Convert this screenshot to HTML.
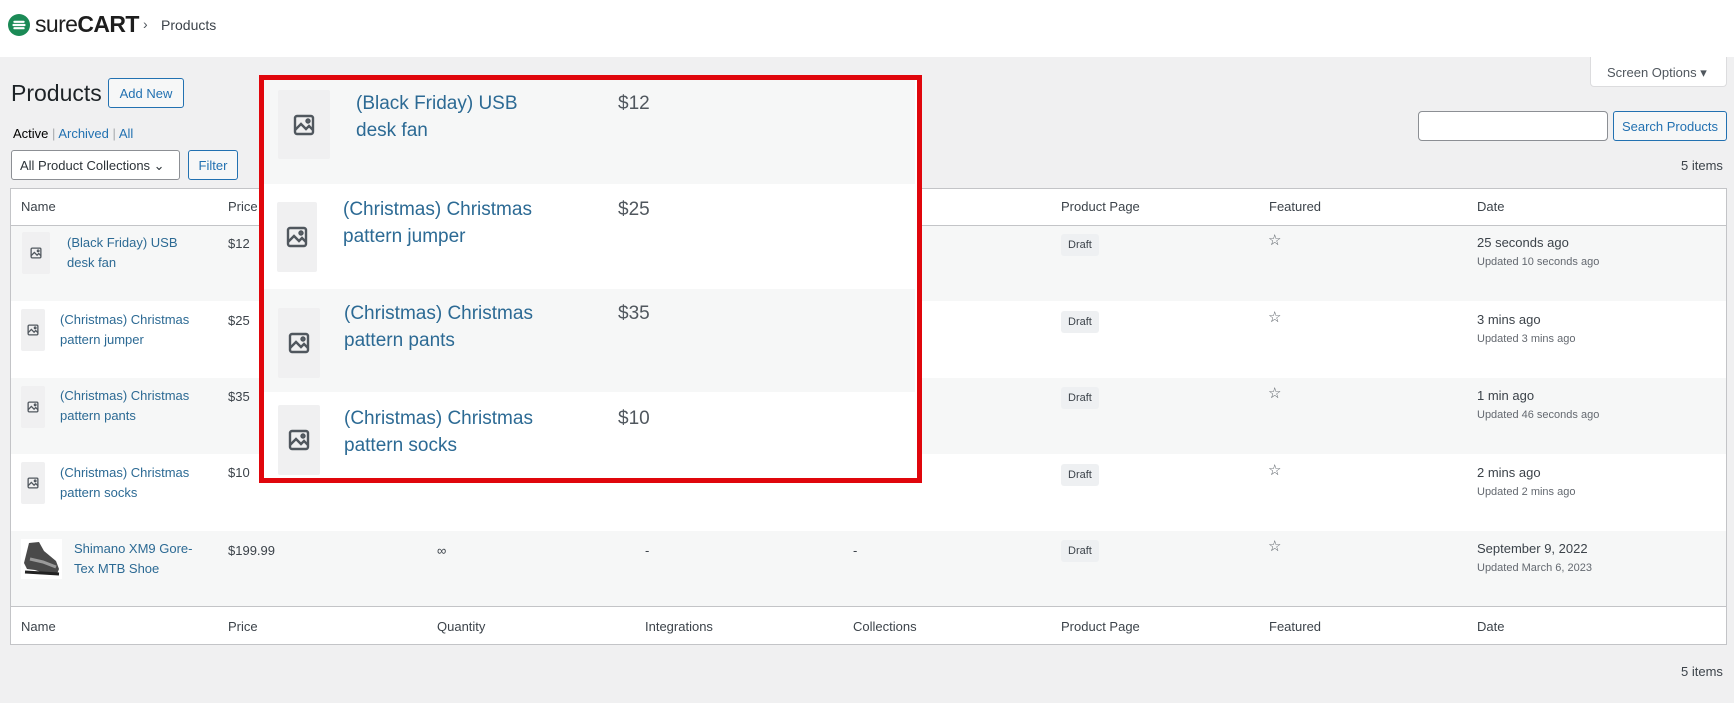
<!DOCTYPE html>
<html><head><meta charset="utf-8">
<style>
*{margin:0;padding:0;box-sizing:border-box}
body{width:1734px;height:703px;background:#f0f0f1;font-family:"Liberation Sans",sans-serif;color:#3c434a;position:relative;overflow:hidden;font-size:13px}
.a{position:absolute;white-space:nowrap}
.lnk{color:#2271b1}
.nm{color:#2c6a94;font-size:13px;line-height:20px}
.ic{position:absolute;background:#f0f0f1;border-radius:2px}
.ic svg{position:absolute;left:50%;top:50%;transform:translate(-50%,-50%)}
.draft{position:absolute;background:#eef0f2;color:#3c434a;font-size:11px;padding:5px 7px;border-radius:3px}
.star{position:absolute;font-size:15px;color:#50575e}
.row{position:absolute;left:11px;width:1715px;height:76px}
.g{background:#f6f7f7}.w{background:#fff}
.dt{position:absolute;font-size:13px;color:#3c434a}
.dt small{display:block;font-size:11px;color:#646970;margin-top:6px}
.big{color:#2c6a94;font-size:19px;line-height:27px}
</style></head><body>
<div class="a" style="left:0;top:0;width:1734px;height:57px;background:#fff"></div>
<svg class="a" style="left:8px;top:14px" width="22" height="22" viewBox="0 0 24 24"><circle cx="12" cy="12" r="12" fill="#1b8a56"/><path d="M7 8.5h10M6 12h12M7 15.5h10" stroke="#fff" stroke-width="2.4" stroke-linecap="round"/></svg>
<div class="a" style="left:35px;top:11px;font-size:23px;color:#1e1e1e;letter-spacing:-0.6px">sure<b>CART</b></div>
<div class="a" style="left:143px;top:16px;font-size:14px;color:#50575e">›</div>
<div class="a" style="left:161px;top:17px;font-size:14px;color:#3c434a">Products</div>

<div class="a" style="left:1590px;top:57px;width:137px;height:30px;background:#fff;border:1px solid #dcdcde;border-top:0;border-radius:0 0 4px 4px;font-size:13px;color:#50575e;padding:8px 0 0 16px">Screen Options ▾</div>

<div class="a" style="left:11px;top:80px;font-size:23px;color:#1d2327">Products</div>
<div class="a" style="left:108px;top:78px;width:76px;height:30px;border:1px solid #2271b1;border-radius:3px;background:#f6f7f7;color:#2271b1;font-size:13px;padding-top:7px;text-align:center">Add New</div>
<div class="a" style="left:13px;top:126px;font-size:13px;color:#000">Active <span style="color:#a7aaad">|</span> <span class="lnk">Archived</span> <span style="color:#a7aaad">|</span> <span class="lnk">All</span></div>
<div class="a" style="left:11px;top:150px;width:169px;height:30px;border:1px solid #8c8f94;border-radius:3px;background:#fff;font-size:13px;color:#2c3338;padding:7px 0 0 8px">All Product Collections ⌄</div>
<div class="a" style="left:188px;top:150px;width:50px;height:30px;border:1px solid #2271b1;border-radius:3px;background:#f6f7f7;color:#2271b1;font-size:13px;padding-top:7px;text-align:center">Filter</div>
<div class="a" style="left:1418px;top:111px;width:190px;height:30px;border:1px solid #8c8f94;border-radius:4px;background:#fff"></div>
<div class="a" style="left:1613px;top:111px;width:114px;height:30px;border:1px solid #2271b1;border-radius:3px;background:#f6f7f7;color:#2271b1;font-size:13px;padding-top:7px;text-align:center">Search Products</div>
<div class="a" style="left:1681px;top:158px;font-size:13px">5 items</div>

<div class="a" style="left:10px;top:188px;width:1717px;height:457px;background:#fff;border:1px solid #c3c4c7"></div>
<div class="a" style="left:11px;top:225px;width:1715px;height:1px;background:#c3c4c7"></div>
<div class="a" style="left:11px;top:606px;width:1715px;height:1px;background:#c3c4c7"></div>
<div class="row g" style="top:226px;height:75px"></div>
<div class="row w" style="top:301px"></div>
<div class="row g" style="top:378px"></div>
<div class="row w" style="top:454px"></div>
<div class="row g" style="top:531px;height:75px"></div>

<div class="a" style="top:199px;left:21px">Name</div>
<div class="a" style="top:199px;left:228px">Price</div>
<div class="a" style="top:199px;left:437px">Quantity</div>
<div class="a" style="top:199px;left:645px">Integrations</div>
<div class="a" style="top:199px;left:853px">Collections</div>
<div class="a" style="top:199px;left:1061px">Product Page</div>
<div class="a" style="top:199px;left:1269px">Featured</div>
<div class="a" style="top:199px;left:1477px">Date</div>
<div class="a" style="top:619px;left:21px">Name</div>
<div class="a" style="top:619px;left:228px">Price</div>
<div class="a" style="top:619px;left:437px">Quantity</div>
<div class="a" style="top:619px;left:645px">Integrations</div>
<div class="a" style="top:619px;left:853px">Collections</div>
<div class="a" style="top:619px;left:1061px">Product Page</div>
<div class="a" style="top:619px;left:1269px">Featured</div>
<div class="a" style="top:619px;left:1477px">Date</div>

<div class="ic" style="left:22px;top:232px;width:28px;height:42px"><svg width="13" height="13" viewBox="0 0 24 24" fill="none" stroke="#50575e" stroke-width="2.4"><rect x="3" y="3" width="18" height="18" rx="2"/><path d="M3 17l6-6 5 5 3-3 4 4"/><circle cx="16" cy="8" r="1.5"/></svg></div>
<div class="a nm" style="left:67px;top:233px">(Black Friday) USB<br>desk fan</div>
<div class="a" style="left:228px;top:236px">$12</div>

<div class="ic" style="left:21px;top:309px;width:24px;height:42px"><svg width="13" height="13" viewBox="0 0 24 24" fill="none" stroke="#50575e" stroke-width="2.4"><rect x="3" y="3" width="18" height="18" rx="2"/><path d="M3 17l6-6 5 5 3-3 4 4"/><circle cx="16" cy="8" r="1.5"/></svg></div>
<div class="a nm" style="left:60px;top:310px">(Christmas) Christmas<br>pattern jumper</div>
<div class="a" style="left:228px;top:313px">$25</div>

<div class="ic" style="left:21px;top:386px;width:24px;height:42px"><svg width="13" height="13" viewBox="0 0 24 24" fill="none" stroke="#50575e" stroke-width="2.4"><rect x="3" y="3" width="18" height="18" rx="2"/><path d="M3 17l6-6 5 5 3-3 4 4"/><circle cx="16" cy="8" r="1.5"/></svg></div>
<div class="a nm" style="left:60px;top:386px">(Christmas) Christmas<br>pattern pants</div>
<div class="a" style="left:228px;top:389px">$35</div>

<div class="ic" style="left:21px;top:462px;width:24px;height:42px"><svg width="13" height="13" viewBox="0 0 24 24" fill="none" stroke="#50575e" stroke-width="2.4"><rect x="3" y="3" width="18" height="18" rx="2"/><path d="M3 17l6-6 5 5 3-3 4 4"/><circle cx="16" cy="8" r="1.5"/></svg></div>
<div class="a nm" style="left:60px;top:463px">(Christmas) Christmas<br>pattern socks</div>
<div class="a" style="left:228px;top:465px">$10</div>

<svg class="a" style="left:21px;top:539px" width="41" height="40" viewBox="0 0 41 40"><rect width="41" height="40" fill="#fff"/><path d="M8 4l10-1 5 9 12 10 3 8-2 5-10 0-12-4-8-1-3-6z" fill="#4a4a4a"/><path d="M9 20l13 3 13 5" stroke="#9a9a9a" stroke-width="3" fill="none"/><path d="M4 33l34 2" stroke="#222" stroke-width="3"/></svg>
<div class="a nm" style="left:74px;top:539px">Shimano XM9 Gore-<br>Tex MTB Shoe</div>
<div class="a" style="left:228px;top:543px">$199.99</div>
<div class="a" style="left:437px;top:543px">∞</div>
<div class="a" style="left:645px;top:543px">-</div>
<div class="a" style="left:853px;top:543px">-</div>

<div class="draft" style="left:1061px;top:234px">Draft</div>
<div class="draft" style="left:1061px;top:311px">Draft</div>
<div class="draft" style="left:1061px;top:387px">Draft</div>
<div class="draft" style="left:1061px;top:464px">Draft</div>
<div class="draft" style="left:1061px;top:540px">Draft</div>
<div class="star" style="left:1268px;top:231px">☆</div>
<div class="star" style="left:1268px;top:308px">☆</div>
<div class="star" style="left:1268px;top:384px">☆</div>
<div class="star" style="left:1268px;top:461px">☆</div>
<div class="star" style="left:1268px;top:537px">☆</div>
<div class="dt" style="left:1477px;top:235px">25 seconds ago<small>Updated 10 seconds ago</small></div>
<div class="dt" style="left:1477px;top:312px">3 mins ago<small>Updated 3 mins ago</small></div>
<div class="dt" style="left:1477px;top:388px">1 min ago<small>Updated 46 seconds ago</small></div>
<div class="dt" style="left:1477px;top:465px">2 mins ago<small>Updated 2 mins ago</small></div>
<div class="dt" style="left:1477px;top:541px">September 9, 2022<small>Updated March 6, 2023</small></div>

<div class="a" style="left:1681px;top:664px;font-size:13px">5 items</div>

<div class="a" style="left:259px;top:75px;width:663px;height:408px;border:5px solid #e0060c;background:#fff;overflow:hidden">
  <div class="a" style="left:0;top:0;width:651px;height:104px;background:#f6f7f7"></div>
  <div class="a" style="left:0;top:104px;width:651px;height:105px;background:#fff"></div>
  <div class="a" style="left:0;top:209px;width:651px;height:103px;background:#f6f7f7"></div>
  <div class="a" style="left:0;top:312px;width:651px;height:89px;background:#fff"></div>
  <div class="ic" style="left:14px;top:10px;width:52px;height:69px"><svg width="24" height="24" viewBox="0 0 24 24" fill="none" stroke="#50575e" stroke-width="2.4"><rect x="3" y="3" width="18" height="18" rx="2"/><path d="M3 17l6-6 5 5 3-3 4 4"/><circle cx="16" cy="8" r="1.5"/></svg></div>
  <div class="a big" style="left:92px;top:10px">(Black Friday) USB<br>desk fan</div>
  <div class="a big" style="left:354px;top:10px;color:#50575e">$12</div>
  <div class="ic" style="left:13px;top:122px;width:40px;height:70px"><svg width="24" height="24" viewBox="0 0 24 24" fill="none" stroke="#50575e" stroke-width="2.4"><rect x="3" y="3" width="18" height="18" rx="2"/><path d="M3 17l6-6 5 5 3-3 4 4"/><circle cx="16" cy="8" r="1.5"/></svg></div>
  <div class="a big" style="left:79px;top:116px">(Christmas) Christmas<br>pattern jumper</div>
  <div class="a big" style="left:354px;top:116px;color:#50575e">$25</div>
  <div class="ic" style="left:14px;top:228px;width:42px;height:70px"><svg width="24" height="24" viewBox="0 0 24 24" fill="none" stroke="#50575e" stroke-width="2.4"><rect x="3" y="3" width="18" height="18" rx="2"/><path d="M3 17l6-6 5 5 3-3 4 4"/><circle cx="16" cy="8" r="1.5"/></svg></div>
  <div class="a big" style="left:80px;top:220px">(Christmas) Christmas<br>pattern pants</div>
  <div class="a big" style="left:354px;top:220px;color:#50575e">$35</div>
  <div class="ic" style="left:14px;top:325px;width:42px;height:70px"><svg width="24" height="24" viewBox="0 0 24 24" fill="none" stroke="#50575e" stroke-width="2.4"><rect x="3" y="3" width="18" height="18" rx="2"/><path d="M3 17l6-6 5 5 3-3 4 4"/><circle cx="16" cy="8" r="1.5"/></svg></div>
  <div class="a big" style="left:80px;top:325px">(Christmas) Christmas<br>pattern socks</div>
  <div class="a big" style="left:354px;top:325px;color:#50575e">$10</div>
</div>
</body></html>
